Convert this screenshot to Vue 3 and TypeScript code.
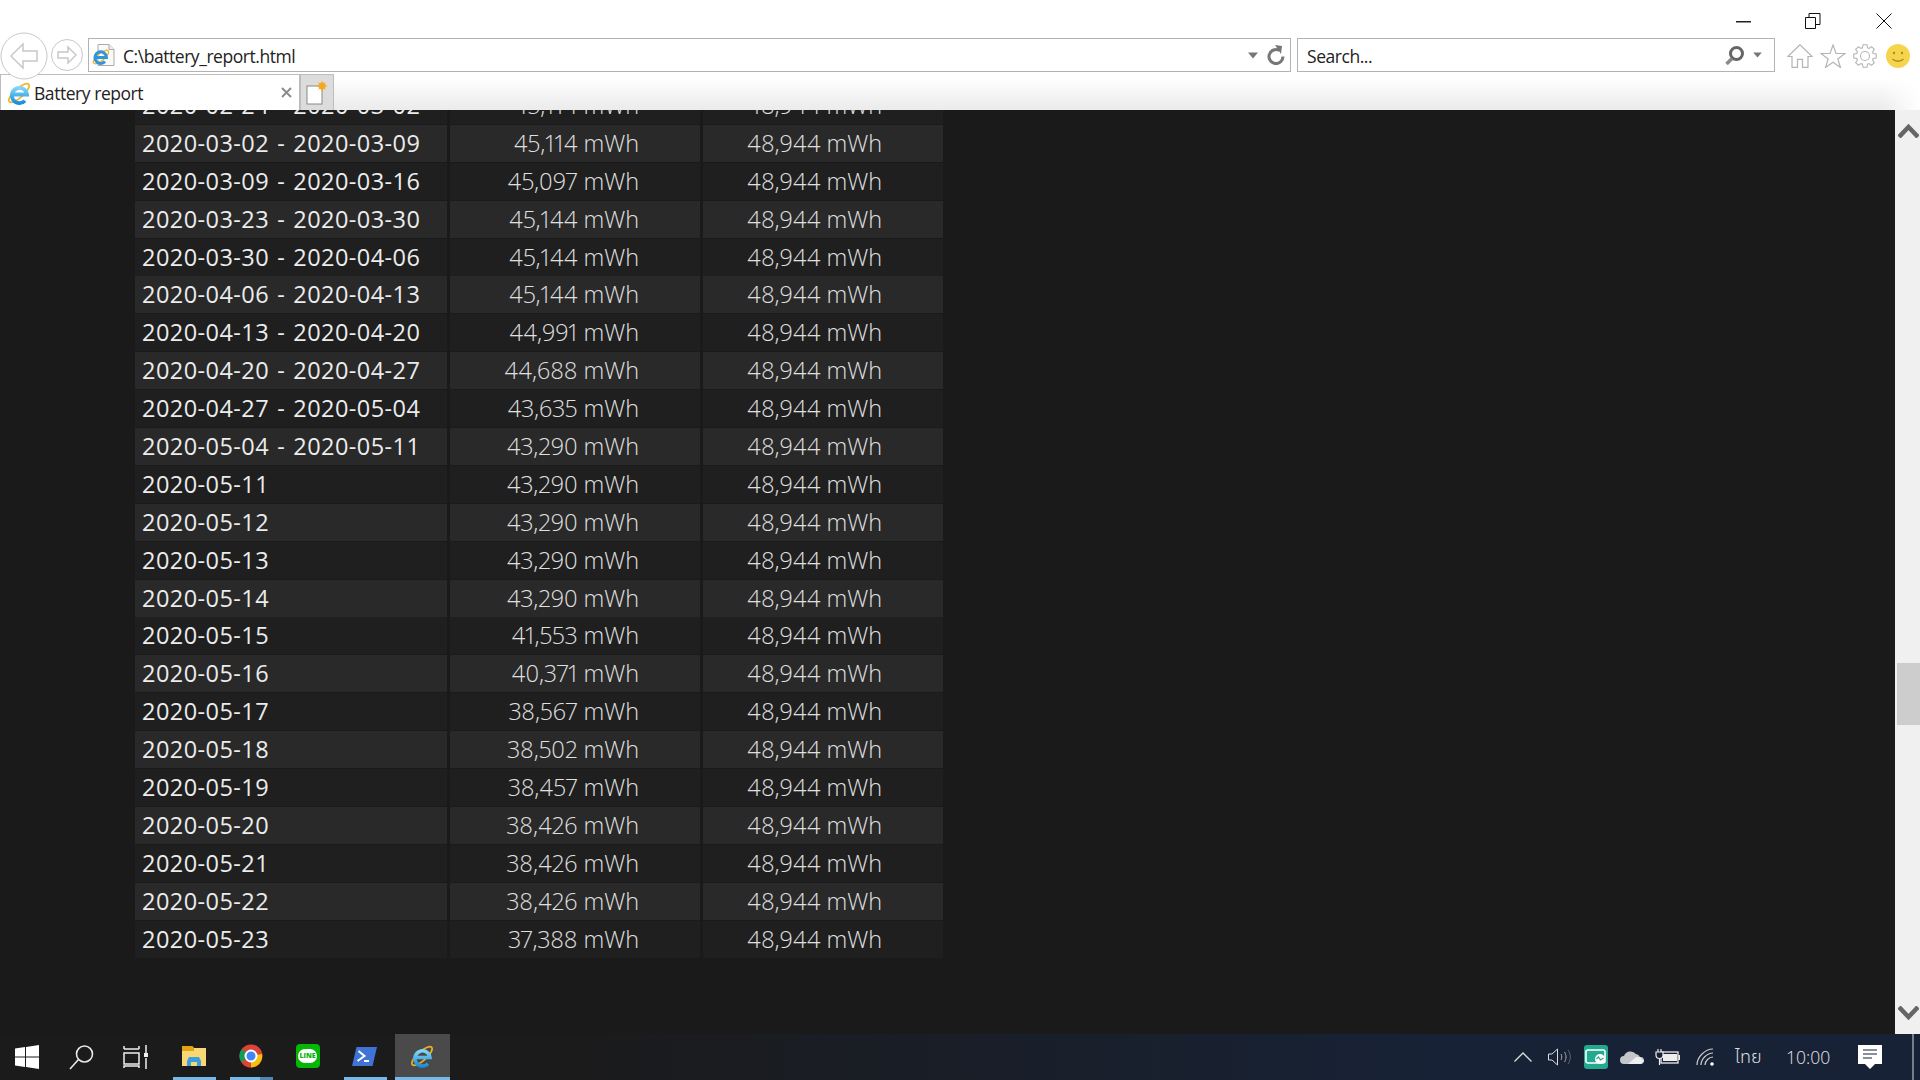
<script setup lang="ts">
interface Row {
  period: string
  full: string
  design: string
}

const raw: [string, string][] = [
  ['2020-02-24 - 2020-03-02', '45,114'],
  ['2020-03-02 - 2020-03-09', '45,114'],
  ['2020-03-09 - 2020-03-16', '45,097'],
  ['2020-03-23 - 2020-03-30', '45,144'],
  ['2020-03-30 - 2020-04-06', '45,144'],
  ['2020-04-06 - 2020-04-13', '45,144'],
  ['2020-04-13 - 2020-04-20', '44,991'],
  ['2020-04-20 - 2020-04-27', '44,688'],
  ['2020-04-27 - 2020-05-04', '43,635'],
  ['2020-05-04 - 2020-05-11', '43,290'],
  ['2020-05-11', '43,290'],
  ['2020-05-12', '43,290'],
  ['2020-05-13', '43,290'],
  ['2020-05-14', '43,290'],
  ['2020-05-15', '41,553'],
  ['2020-05-16', '40,371'],
  ['2020-05-17', '38,567'],
  ['2020-05-18', '38,502'],
  ['2020-05-19', '38,457'],
  ['2020-05-20', '38,426'],
  ['2020-05-21', '38,426'],
  ['2020-05-22', '38,426'],
  ['2020-05-23', '37,388'],
]

const rows: Row[] = raw.map(([period, full]) => ({
  period,
  full: `${full} mWh`,
  design: '48,944 mWh',
}))

// outline of the settings cog, 8 teeth around (12,12)
const gearPath = (() => {
  const pts: string[] = []
  for (let i = 0; i < 8; i++) {
    const a = (i * Math.PI) / 4
    for (const [off, r] of [[-0.3, 8.6], [-0.17, 11.4], [0.17, 11.4], [0.3, 8.6]]) {
      const x = 12 + r * Math.cos(a + off)
      const y = 12 + r * Math.sin(a + off)
      pts.push(`${x.toFixed(2)} ${y.toFixed(2)}`)
    }
  }
  return `M${pts.join('L')}z`
})()
</script>

<template>
  <div class="screen">
    <header class="chrome">
      <div class="window-row">
        <svg width="15" height="2" class="win-min"><rect width="15" height="1.500" fill="#222" /></svg>
        <svg width="16" height="16" viewBox="0 0 16 16" class="win-restore">
          <path d="M.5 4.500h10v11H.5zM4 4.500V.5h11v11h-4.500" fill="none" stroke="#111" />
        </svg>
        <svg width="16" height="16" viewBox="0 0 16 16" class="win-close">
          <path d="M.5.500l15 15M15.500.500l-15 15" fill="none" stroke="#111" />
        </svg>
      </div>

      <div class="nav-row">
        <svg class="nav-back" width="48" height="48" viewBox="0 0 48 48">
          <circle cx="24" cy="24" r="23" fill="#fff" stroke="#c8c8c8" />
          <path d="M11 24l12-12v7h14v10H23v7z" fill="#fff" stroke="#c8c8c8" stroke-width="1.500" />
        </svg>
        <svg class="nav-forward" width="32" height="32" viewBox="0 0 32 32">
          <circle cx="16" cy="16" r="15.500" fill="#fff" stroke="#c8c8c8" />
          <path d="M25 16l-8-8v5H7v6h10v5z" fill="#fff" stroke="#c8c8c8" stroke-width="1.500" />
        </svg>

        <div class="field address">
          <svg width="24" height="24" viewBox="0 0 24 24" class="page-icon">
            <path d="M6 1.500h11l5 5v16H6z" fill="#fafafa" stroke="#aaa" />
            <path d="M17 1.500v5h5" fill="#eee" stroke="#aaa" />
            <ellipse cx="9" cy="14" rx="9.500" ry="3.500" transform="rotate(-40 9 14)" fill="none" stroke="#f1b72c" stroke-width="1.400" />
            <path d="M3.500 14.500h11a5.800 5.800 0 1 0-1.500 4" fill="none" stroke="#2f95dc" stroke-width="3" />
          </svg>
          <span class="field-text url">C:\battery_report.html</span>
          <svg width="10" height="7" viewBox="0 0 10 7" class="caret"><path d="M0 .5h10L5 6.500z" fill="#777" /></svg>
          <svg width="18" height="20" viewBox="0 0 18 20" class="refresh">
            <path d="M12.500 5.500a7 7 0 1 0 3.500 6" fill="none" stroke="#777" stroke-width="3" />
            <path d="M8 0l7 1-1 8z" fill="#777" />
          </svg>
        </div>

        <div class="field search">
          <span class="field-text query">Search...</span>
          <svg width="19" height="19" viewBox="0 0 19 19" class="lens">
            <circle cx="11.500" cy="7.500" r="6" fill="none" stroke="#666" stroke-width="3" />
            <path d="M7 12.500L1.500 18" stroke="#8a8a8a" stroke-width="3.500" />
          </svg>
          <svg width="9" height="6" viewBox="0 0 10 7" class="caret-small"><path d="M0 .5h10L5 6.500z" fill="#777" /></svg>
        </div>

        <div class="tools">
          <svg width="26" height="24" viewBox="0 0 26 24">
            <path d="M13 .8L.8 12.500H5v10.800h5.500v-8h5v8H21V12.500h4.200z" fill="#fff" stroke="#b4b4b4" stroke-width="1.200" />
          </svg>
          <svg width="26" height="24" viewBox="0 0 26 24">
            <path d="M13 1l3 8.500h9l-7.200 5.500 2.700 8.500L13 18.300l-7.500 5.200 2.700-8.500L1 9.500h9z" fill="#fff" stroke="#b4b4b4" stroke-width="1.200" />
          </svg>
          <svg width="24" height="24" viewBox="0 0 24 24">
            <path :d="gearPath" fill="#fff" stroke="#b4b4b4" stroke-width="1.100" />
            <circle cx="12" cy="12" r="4.500" fill="none" stroke="#b4b4b4" stroke-width="1.100" />
          </svg>
          <svg width="24" height="24" viewBox="0 0 24 24" class="smile">
            <circle cx="12" cy="12" r="12" fill="#f6d44c" />
            <circle cx="8" cy="9" r="1.200" fill="#a98d2a" />
            <circle cx="16" cy="9" r="1.200" fill="#a98d2a" />
            <path d="M6.500 15c3 3 8 3 11 0" fill="none" stroke="#a98d2a" stroke-width="1.300" />
          </svg>
        </div>
      </div>

      <div class="tab-row">
        <div class="tab">
          <svg width="24" height="24" viewBox="0 0 24 24">
            <defs>
              <linearGradient id="ie-tab" x1="0" y1="0" x2="0" y2="1">
                <stop offset="0" stop-color="#7fd6f7" />
                <stop offset="1" stop-color="#1a8fdc" />
              </linearGradient>
            </defs>
            <ellipse cx="12" cy="12" rx="13" ry="4.500" transform="rotate(-42 12 12)" fill="none" stroke="#f1b72c" stroke-width="1.800" />
            <path d="M5 13.500h15a7.600 7.600 0 1 0-2 6.200" fill="none" stroke="url(#ie-tab)" stroke-width="3.800" />
          </svg>
          <span class="tab-title">Battery report</span>
          <svg width="11" height="11" viewBox="0 0 11 11" class="tab-close">
            <path d="M1 1l9 9M10 1l-9 9" stroke="#8c8c8c" stroke-width="2" />
          </svg>
        </div>
        <div class="new-tab">
          <svg width="22" height="24" viewBox="0 0 22 24">
            <rect x="1" y="5" width="15" height="18" fill="#fff" stroke="#888" />
            <circle cx="16" cy="5" r="3.500" fill="#f4a81c" />
            <path d="M16 0v10M11 5h10M12.500 1.500l7 7M19.500 1.500l-7 7" stroke="#f4a81c" />
          </svg>
        </div>
      </div>
    </header>

    <main class="viewport">
      <div class="page">
        <div class="report">
          <div v-for="row in rows" :key="row.period" class="report-row">
            <div class="cell date">{{ row.period }}</div>
            <div class="cell mw">{{ row.full }}</div>
            <div class="cell mw">{{ row.design }}</div>
          </div>
        </div>
      </div>
      <aside class="scrollbar">
        <svg width="21" height="15" viewBox="0 0 21 15" class="arrow-up">
          <path d="M1 14l9.500-10L20 14" fill="none" stroke="#666" stroke-width="4.500" />
        </svg>
        <div class="track"><div class="thumb"></div></div>
        <svg width="21" height="15" viewBox="0 0 21 15" class="arrow-down">
          <path d="M1 1l9.500 10L20 1" fill="none" stroke="#666" stroke-width="4.500" />
        </svg>
      </aside>
    </main>

    <footer class="taskbar">
      <div class="task-left">
        <div class="task-btn start">
          <svg width="24" height="24" viewBox="0 0 24 24">
            <path d="M0 3.500l10-1.400v9.400H0zM11 2l13-2v11.500H11zM0 12.500h10v9.400L0 20.500zM11 12.500h13V24l-13-2z" fill="#fff" />
          </svg>
        </div>
        <div class="task-btn search-btn">
          <svg width="25" height="25" viewBox="0 0 25 25">
            <circle cx="15.500" cy="9" r="8" fill="none" stroke="#e8e8e8" stroke-width="1.600" />
            <path d="M9.500 14.500L1 24" stroke="#e8e8e8" stroke-width="1.600" />
          </svg>
        </div>
        <div class="task-btn view-btn">
          <svg width="25" height="24" viewBox="0 0 25 24">
            <path d="M1 4V1M16 4V1M1 4h15M1 8h15v11H1zM1 23v-2h15v2M23 0v8M23 13v11" fill="none" stroke="#f0f0f0" stroke-width="1.500" />
            <rect x="21" y="8" width="4" height="4" fill="#f0f0f0" />
          </svg>
        </div>
        <div class="app running">
          <svg width="24" height="22" viewBox="0 0 24 22">
            <path d="M0 1h10l2 2h12v18H0z" fill="#f8d775" />
            <path d="M0 1h10l2 2v3H0z" fill="#e0a50f" />
            <path d="M5 21v-5l2-4h10l2 4v5h-4v-4H9v4z" fill="#3b9fe0" />
          </svg>
        </div>
        <div class="app running split">
          <svg width="24" height="24" viewBox="0 0 24 24">
            <circle cx="12" cy="12" r="11.500" fill="#db4437" />
            <path d="M12 12L2.300 18A11.500 11.500 0 0 1 3 5z" fill="#0f9d58" />
            <path d="M12 12l11-2a11.500 11.500 0 0 1-11 13.500z" fill="#f4c20d" />
            <circle cx="12" cy="12" r="5.500" fill="#4285f4" stroke="#fff" stroke-width="2" />
          </svg>
        </div>
        <div class="app">
          <div class="line-logo"><span>LINE</span></div>
        </div>
        <div class="app running">
          <svg width="25" height="19" viewBox="0 0 25 19">
            <path d="M4.500 0H25l-4.500 19H0z" fill="#3f73d6" />
            <path d="M6.500 4l6 5-7 5" fill="none" stroke="#fff" stroke-width="2" />
            <path d="M12 14h5" stroke="#fff" stroke-width="2" />
          </svg>
        </div>
        <div class="app running active">
          <svg width="24" height="24" viewBox="0 0 24 24">
            <defs>
              <linearGradient id="ie-task" x1="0" y1="0" x2="0" y2="1">
                <stop offset="0" stop-color="#7fd6f7" />
                <stop offset="1" stop-color="#1a8fdc" />
              </linearGradient>
            </defs>
            <ellipse cx="12" cy="12" rx="13" ry="4.500" transform="rotate(-42 12 12)" fill="none" stroke="#e8ae22" stroke-width="1.800" />
            <path d="M5 13.500h15a7.600 7.600 0 1 0-2 6.200" fill="none" stroke="url(#ie-task)" stroke-width="3.500" />
          </svg>
        </div>
      </div>

      <div class="tray">
        <svg width="18" height="10" viewBox="0 0 18 10" class="tray-chevron">
          <path d="M.5 9.500L9 1l8.500 8.500" fill="none" stroke="#ddd" stroke-width="1.300" />
        </svg>
        <svg width="23" height="18" viewBox="0 0 23 18" class="tray-sound">
          <path d="M.5 6h3.500L9.500 1v16L4 12H.5z" fill="none" stroke="#ddd" />
          <path d="M13 6c1 2 1 4 0 6M16.500 4c2 3 2 7 0 10" fill="none" stroke="#aaa" />
          <path d="M20 2c3 4 3 10 0 14" fill="none" stroke="#666" />
        </svg>
        <div class="tray-green">
          <svg width="22" height="16" viewBox="0 0 22 16">
            <rect x="1" y="1" width="19" height="13" rx="2" fill="none" stroke="#fff" stroke-width="1.600" />
            <circle cx="15" cy="10" r="5" fill="#fff" />
            <path d="M11.500 10l2-2 2 3 3-2" fill="none" stroke="#23a98e" stroke-width="1.200" />
          </svg>
        </div>
        <svg width="24" height="16" viewBox="0 0 24 16" class="tray-cloud">
          <path d="M4 15a4 4 0 0 1 0-8 7 7 0 0 1 12-2 5 5 0 0 1 4 3 3.500 3.500 0 0 1 1 7z" fill="#c4c6ca" />
          <path d="M8 15l8-7 4 0 4 4-3 3z" fill="#eceef0" />
        </svg>
        <svg width="25" height="18" viewBox="0 0 25 18" class="tray-battery">
          <rect x="6" y="4" width="17" height="11" fill="none" stroke="#eee" stroke-width="1.300" />
          <rect x="8" y="6" width="14" height="7" fill="#eee" />
          <rect x="23.500" y="7" width="1.500" height="5" fill="#eee" />
          <path d="M1 4h7v3a3 3 0 0 1-7 0zM3 1v3M6 1v3M4.500 10v7" fill="#172236" stroke="#eee" stroke-width="1.200" />
        </svg>
        <svg width="19" height="18" viewBox="0 0 19 18" class="tray-wifi">
          <path d="M1 17C1 9 9 1 17 1M5 17c0-6 6-12 12-12M9 17c0-4 4-8 8-8" fill="none" stroke="#ccc" stroke-width="1.200" />
          <circle cx="16" cy="16" r="1.800" fill="#fff" />
        </svg>
        <span class="tray-lang">ไทย</span>
        <span class="tray-clock">10:00</span>
        <svg width="24" height="24" viewBox="0 0 24 24" class="tray-note">
          <path d="M0 0h24v19h-7l-5 5-5-5H0z" fill="#fff" />
          <path d="M5 5h14M5 9h14M5 13h9" stroke="#172236" stroke-width="1.200" />
        </svg>
        <div class="show-desktop"></div>
      </div>
    </footer>
  </div>
</template>

<style>
html,
body {
  margin: 0;
  overflow: hidden;
  background: #1a1a1a;
}
</style>

<style scoped>
.screen {
  width: 1920px;
  height: 1080px;
  display: flex;
  flex-direction: column;
  font-family: "Open Sans", "Noto Sans", "Noto Sans Thai", sans-serif;
  overflow: hidden;
}

/* browser chrome */
.chrome {
  height: 110px;
  flex: none;
  background: #fff;
  display: flex;
  flex-direction: column;
}

.window-row {
  height: 31px;
  flex: none;
  display: flex;
  align-items: center;
}

.win-min {
  margin-left: 1736px;
  margin-top: 13px;
}

.win-restore {
  margin-left: 54px;
  margin-top: 11px;
}

.win-close {
  margin-left: 55px;
  margin-top: 11px;
}

.nav-row {
  height: 43px;
  flex: none;
  display: flex;
  align-items: flex-start;
}

.nav-back {
  margin-top: 1px;
  flex: none;
  position: relative;
  z-index: 2;
}

.nav-forward {
  margin: 8px 0 0 3px;
  flex: none;
}

.field {
  height: 34px;
  box-sizing: border-box;
  margin-top: 7px;
  border: 1px solid #b3b3b3;
  display: flex;
  align-items: center;
  background: #fff;
}

.address {
  width: 1203px;
  margin-left: 5px;
  padding: 0 4px 0 3px;
}

.search {
  width: 478px;
  margin-left: 6px;
  padding: 0 12px 0 9px;
}

.field-text {
  font-size: 17.500px;
  letter-spacing: -0.450px;
  color: #222;
  flex: 1;
  padding-top: 2px;
}

.url {
  margin-left: 7px;
}

.page-icon {
  flex: none;
}

.caret {
  margin-right: 9px;
}

.refresh {
  margin-right: 1px;
}

.lens {
  margin-right: 9px;
}

.tools {
  display: flex;
  align-items: center;
  margin: 13px 0 0 12px;
  gap: 7px;
}

.smile {
  margin-left: 2px;
}

.tab-row {
  flex: 1;
  display: flex;
  align-items: flex-start;
  background:
    linear-gradient(90deg, rgba(255, 255, 255, 0) 98%, #fff 100%),
    linear-gradient(#fff 10%, #ececec 95%);
  border-bottom: 1px solid #fff;
}

.tab {
  width: 300px;
  height: 36px;
  box-sizing: border-box;
  border: 1px solid #bdbdbd;
  border-bottom: none;
  background: #fff;
  display: flex;
  align-items: center;
  padding: 0 6px;
  gap: 3px;
}

.tab-title {
  flex: 1;
  font-size: 17.500px;
  letter-spacing: -0.450px;
  color: #222;
}

.tab-close {
  margin-right: 1px;
}

.new-tab {
  width: 34px;
  height: 36px;
  box-sizing: border-box;
  border: 1px solid #bdbdbd;
  border-bottom: none;
  background: #dcdcdc;
  display: flex;
  align-items: center;
  justify-content: center;
}

/* page area */
.viewport {
  flex: 1;
  min-height: 0;
  display: flex;
  background: #1a1a1a;
}

.page {
  flex: 1;
  min-width: 0;
  overflow: hidden;
  padding-left: 135px;
}

.report {
  margin-top: -23px;
  display: flex;
  flex-direction: column;
  gap: 2.900px;
}

.report-row {
  display: grid;
  grid-template-columns: 312px 250px 240px;
  column-gap: 3px;
  height: 35px;
  width: 808px;
}

.cell {
  background: #1f1f1f;
  font-size: 23.500px;
  line-height: 37px;
  letter-spacing: -0.050px;
}

.report-row:nth-child(even) .cell {
  background: #292929;
}

.date {
  padding-left: 7px;
  color: #ececec;
  letter-spacing: 0.450px;
  word-spacing: 1.500px;
}

.mw {
  padding-right: 61px;
  text-align: right;
  font-weight: 300;
  font-variant-numeric: proportional-nums;
  color: #e0e0e0;
}

.scrollbar {
  width: 25px;
  flex: none;
  background: #f0f0f0;
  display: flex;
  flex-direction: column;
  align-items: center;
  padding-left: 1px;
  box-sizing: border-box;
}

.arrow-up {
  margin-top: 13px;
  flex: none;
}

.arrow-down {
  margin-bottom: 13px;
  flex: none;
}

.track {
  flex: 1;
  width: 23px;
  position: relative;
}

.thumb {
  position: absolute;
  top: 525px;
  left: 0;
  right: 0;
  height: 62px;
  background: #cdcdcd;
}

/* taskbar */
.taskbar {
  height: 46px;
  flex: none;
  display: flex;
  justify-content: space-between;
  background: linear-gradient(90deg, #1b1b1b 0%, #1b1b1c 30%, #172236 75%, #172236 100%);
}

.task-left {
  display: flex;
  align-items: stretch;
}

.task-btn {
  display: flex;
  align-items: center;
  justify-content: center;
  box-sizing: border-box;
}

.start {
  width: 52px;
  padding-left: 2px;
}

.search-btn {
  width: 58px;
}

.view-btn {
  width: 50px;
  margin-right: 13px;
}

.app {
  width: 43px;
  margin-right: 14px;
  display: flex;
  align-items: center;
  justify-content: center;
  position: relative;
  padding: 0 2px 2px 0;
  box-sizing: border-box;
}

.running::after {
  content: "";
  position: absolute;
  left: 0;
  right: 0;
  bottom: 0;
  height: 3px;
  background: #76b9ed;
}

.split::before {
  content: "";
  position: absolute;
  right: 0;
  bottom: 0;
  width: 13px;
  height: 3px;
  background: #4f86b4;
  z-index: 1;
}

.active {
  width: 55px;
  margin-left: -6px;
  background: #4a4a4a;
}

.line-logo {
  width: 24px;
  height: 24px;
  border-radius: 4px;
  background: #06b606;
  display: flex;
  align-items: center;
  justify-content: center;
}

.line-logo span {
  font-size: 7px;
  font-weight: 800;
  color: #06b606;
  background: #fff;
  border-radius: 8px;
  padding: 3px 1px;
  line-height: 8px;
}

.tray {
  display: flex;
  align-items: center;
  position: relative;
  padding-right: 38px;
}

.tray-sound {
  margin-left: 16px;
}

.tray-green {
  width: 24px;
  height: 24px;
  margin-left: 13px;
  border-radius: 3px;
  background: #23a98e;
  display: flex;
  align-items: center;
  justify-content: center;
}

.tray-cloud {
  margin-left: 12px;
}

.tray-battery {
  margin-left: 11px;
}

.tray-wifi {
  margin-left: 16px;
}

.tray-lang {
  margin-left: 20px;
  width: 30px;
  font-size: 18px;
  color: #ddd;
  font-weight: 300;
}

.tray-clock {
  margin-left: 21px;
  width: 44px;
  font-size: 17.500px;
  font-weight: 300;
  color: #e4e4e4;
}

.tray-note {
  margin-left: 28px;
}

.show-desktop {
  position: absolute;
  right: 6px;
  top: 0;
  bottom: 0;
  width: 2px;
  background: #777d88;
}
</style>
